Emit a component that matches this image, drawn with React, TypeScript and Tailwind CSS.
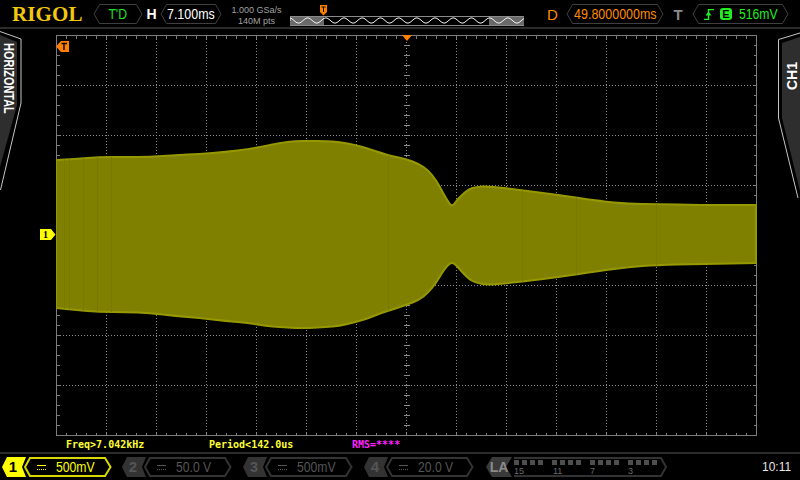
import type { ReactNode } from "react";

// plot is 700x400 with 50px divisions, coordinates below are relative to it (x-57, y-35)
const topEdge: [number, number][] = [
  [0, 125], [20, 124], [43, 122], [70, 122], [93, 122], [120, 120], [143, 119], [170, 117], [193, 114], [210, 111],
  [223, 108], [240, 106], [253, 106], [270, 106], [283, 107], [300, 110], [313, 114], [325, 118], [335, 121], [350, 124],
  [363, 129], [372, 135], [380, 145], [386, 156], [391, 165], [396, 172], [401, 165], [407, 159], [413, 154], [420, 152],
  [433, 151], [463, 155], [503, 160], [543, 166], [573, 169], [600, 169], [643, 170], [700, 170],
];
const bottomEdge: [number, number][] = [
  [0, 273], [20, 275], [43, 277], [70, 277], [93, 278], [120, 281], [143, 283], [170, 286], [193, 288], [210, 291],
  [223, 292], [240, 293], [253, 293], [270, 292], [283, 291], [300, 287], [313, 283], [325, 278], [335, 275], [350, 270],
  [363, 265], [372, 258], [380, 248], [386, 238], [391, 231], [396, 227], [401, 231], [407, 238], [413, 244], [420, 248],
  [433, 250], [463, 247], [503, 242], [543, 236], [573, 232], [600, 230], [643, 229], [700, 228],
];

const smooth = (pts: [number, number][]) => {
  let d = `L${pts[0][0]} ${pts[0][1]}`;
  for (let i = 1; i < pts.length - 1; i++) {
    const mx = (pts[i][0] + pts[i + 1][0]) / 2;
    const my = (pts[i][1] + pts[i + 1][1]) / 2;
    d += ` Q${pts[i][0]} ${pts[i][1]} ${mx} ${my}`;
  }
  const last = pts[pts.length - 1];
  return d + ` L${last[0]} ${last[1]}`;
};

const range = (n: number) => Array.from({ length: n }, (_, i) => i);

// memory strip sine
const memoryWave = () => {
  let d = "M0 5";
  for (let x = 0; x <= 234; x++) d += ` L${x} ${(4.5 + 2.6 * Math.sin((x - 4) * (Math.PI * 2) / 18.2)).toFixed(2)}`;
  return d;
};

function Hex({ w, stroke = "#3f3f3f", className = "", children }: { w: number; stroke?: string; className?: string; children?: ReactNode }) {
  return (
    <div className={`relative h-[20px] shrink-0 flex items-center justify-center ${className}`} style={{ width: w }}>
      <svg className="absolute inset-0" width={w} height={20}>
        <path d={`M6.5 .5H${w - 6.5}L${w - 1} 10L${w - 6.5} 19.5H6.5L1 10Z`} fill="none" stroke={stroke} strokeWidth="1" />
      </svg>
      <div className="relative flex items-center">{children}</div>
    </div>
  );
}

function DcIcon({ color }: { color: string }) {
  return (
    <svg width="9" height="5" className="relative shrink-0">
      <path d="M0 .5H9" stroke={color} />
      <path d="M0 4.5H9" stroke={color} strokeDasharray="1 1" />
    </svg>
  );
}

function Channel({ n, volts, on }: { n: number; volts: string; on?: boolean }) {
  const color = on ? "#ffff00" : "#555555";
  return (
    <div className="flex items-center shrink-0 w-[111px] h-[20px]">
      <div className="relative w-[24px] h-[20px] flex items-center justify-center shrink-0">
        <svg className="absolute inset-0" width="24" height="20">
          <path d="M5 0H24L20 10L24 20H5L0 10Z" fill={on ? "#ffff00" : "#333333"} />
        </svg>
        <span className={`relative -ml-[2px] font-bold text-[15px] ${on ? "text-black" : "text-[#555555]"}`}>{n}</span>
      </div>
      <div className="relative -ml-[2px] w-[88px] h-[20px] flex items-center pl-[13px] shrink-0">
        <svg className="absolute inset-0" width="88" height="20">
          <path d="M1 10L6 1H81L86.5 10L81 19H6Z" fill="none" stroke={on ? "#d8d800" : "#333333"} strokeWidth="2" />
        </svg>
        <DcIcon color={color} />
        <span className="relative ml-[10px] text-[14px] origin-left scale-x-[.87] whitespace-nowrap" style={{ color }}>{volts}</span>
      </div>
    </div>
  );
}

function Plot() {
  const stripes = [8, 13, 27, 41, 55, 332, 466, 520, 600];
  const wave = `M0 ${topEdge[0][1]} ${smooth(topEdge)} ${smooth([...bottomEdge].reverse())} Z`;
  return (
    <svg width="702" height="402" className="block" shapeRendering="crispEdges">
      <defs>
        <clipPath id="wave-clip">
          <path d={wave} />
        </clipPath>
      </defs>
      <g transform="translate(.5 .5)">
        {range(13).map((i) => (
          <path key={`v${i}`} d={`M${50 * (i + 1)} 0V400`} stroke="#8a8a8a" strokeDasharray="1 2" />
        ))}
        {range(7).map((i) => (
          <path key={`h${i}`} d={`M0 ${50 * (i + 1)}H700`} stroke="#8a8a8a" strokeDasharray="1 2" />
        ))}
        {range(69).map((i) => {
          const x = 10 * (i + 1);
          return <path key={`t${i}`} d={`M${x} 0v3M${x} 400v-3`} stroke="#7c7c7c" />;
        })}
        {range(39).map((i) => {
          const y = 10 * (i + 1);
          return <path key={`l${i}`} d={`M0 ${y}h3M700 ${y}h-3`} stroke="#7c7c7c" />;
        })}
        {range(39).map((i) => (
          <path key={`c${i}`} d={`M347 ${10 * (i + 1)}h6`} stroke="#8a8a8a" />
        ))}
        <rect x="0" y="0" width="700" height="400" fill="none" stroke="#7c7c7c" />
      </g>
      <path d={wave} fill="#808000" stroke="#969800" strokeWidth="2" shapeRendering="auto" />
      <g clipPath="url(#wave-clip)">
        {stripes.map((x) => (
          <path key={x} d={`M${x} 100V300`} stroke="#7a7a00" strokeWidth="1" />
        ))}
      </g>
    </svg>
  );
}

export default function App() {
  return (
    <div className="w-[800px] h-[480px] bg-black overflow-hidden flex flex-col font-['Liberation_Sans',sans-serif]">
      {/* Top bar */}
      <div className="h-[27px] flex items-start pt-[4px] shrink-0">
        <span className="w-[93px] shrink-0 pl-[12px] -mt-[2px] font-['Liberation_Serif',serif] font-bold text-[21px] leading-[24px] text-[#f2c80f] tracking-[.1px]">RIGOL</span>
        <Hex w={50}>
          <span className="text-[14px] text-[#22e022] scale-x-[.87]">T'D</span>
        </Hex>
        <span className="w-[17px] shrink-0 text-center text-[14px] leading-[20px] font-bold text-white">H</span>
        <Hex w={62}>
          <span className="text-[14px] text-white scale-x-[.89]">7.100ms</span>
        </Hex>
        <div className="w-[68px] shrink-0 flex flex-col items-center text-[9px] leading-[11px] text-[#a0a0a0] pl-[1px] mt-[1px]">
          <span className="whitespace-nowrap">1.000 GSa/s</span>
          <span className="whitespace-nowrap">140M pts</span>
        </div>
        <div className="relative w-[234px] h-[10px] mt-[12px] bg-[#6a6a6a] shrink-0">
          <div className="absolute left-[34px] w-[165px] top-0 h-full bg-black" />
          <svg className="absolute inset-0" width="234" height="10">
            <path d="M0 .5H234" stroke="#8a8a8a" />
            <path d="M0 9.5H234" stroke="#8a8a8a" />
            <path d={memoryWave()} fill="none" stroke="#f2f2f2" strokeWidth="1" />
          </svg>
          <svg className="absolute -top-[11px] left-[30px]" width="8" height="11">
            <path d="M0 0H7V7L3.5 10.5L0 7Z" fill="#ff8000" />
            <path d="M1.5 2H5.5M3.5 2V7" stroke="#000" strokeWidth="1" />
          </svg>
        </div>
        <span className="w-[43px] shrink-0 pl-[23px] text-[15px] leading-[22px] text-[#ff8a00]">D</span>
        <Hex w={98} className="-ml-[1px]">
          <span className="text-[14px] text-[#ff8a00] scale-x-[.89] whitespace-nowrap">49.8000000ms</span>
        </Hex>
        <span className="w-[28px] shrink-0 text-center text-[15px] leading-[22px] font-bold text-[#8c8c8c]">T</span>
        <Hex w={97}>
          <svg width="10" height="11" className="mr-[6px] ml-[1px]">
            <path d="M0 10.5H4.5V.5H10" stroke="#22ee22" fill="none" strokeWidth="1.4" />
            <path d="M1.5 6.5L4.5 2.5L7.5 6.5Z" fill="#22ee22" />
          </svg>
          <span className="w-[12px] h-[12px] mr-[7px] rounded-[3px] bg-[#22ee22] text-black text-[11px] leading-[12px] font-bold text-center">E</span>
          <span className="text-[14px] text-[#22ee22] origin-left scale-x-[.87] w-[39px] whitespace-nowrap">516mV</span>
        </Hex>
      </div>

      <div className="h-[2px] bg-[#2b2b2b] shrink-0" />

      {/* Scope area */}
      <div className="flex h-[423px] shrink-0">
        <div className="relative w-[56px] shrink-0">
          <svg className="absolute left-0 top-[2px]" width="23" height="160">
            <path d="M0 4L17 11V74L0 136Z" fill="#2e2e2e" />
            <path d="M0 .5L21 8V72L.5 159" fill="none" stroke="#c4c4c4" strokeWidth="1" />
          </svg>
          <span className="absolute left-[2px] top-[14px] [writing-mode:vertical-rl] text-[14px] leading-[14px] font-bold text-white origin-top scale-y-[.78] whitespace-nowrap">HORIZONTAL</span>
          <svg className="absolute left-[40px] top-[200px]" width="16" height="11">
            <path d="M0 0H11L15.5 5.5L11 11H0Z" fill="#ffff00" />
          </svg>
          <span className="absolute left-[40px] top-[200px] w-[11px] text-center text-[10px] leading-[11px] text-black font-['Liberation_Serif',serif] font-bold">1</span>
        </div>
        <div className="relative w-[722px] shrink-0 pt-[6px]">
          <Plot />
          <svg className="absolute left-0 top-[12px]" width="14" height="12">
            <path d="M0 5.5L5 0H13V11H5Z" fill="#ff8000" />
            <path d="M5.5 2.5H11M8 2.5V9" stroke="#000" strokeWidth="1.4" />
          </svg>
          <svg className="absolute left-[346px] top-[6px]" width="12" height="7">
            <path d="M0 0H10L5 6Z" fill="#ff8000" />
          </svg>
        </div>
        <div className="relative flex-1">
          <svg className="absolute left-0 top-[2px]" width="22" height="172">
            <path d="M4 12L22 6V160L4 87Z" fill="#2e2e2e" />
            <path d="M22 2L.5 8.5V87L20 167" fill="none" stroke="#c4c4c4" strokeWidth="1" />
          </svg>
          <span className="absolute left-[7px] top-[33px] rotate-180 [writing-mode:vertical-rl] text-[14px] leading-[14px] font-bold text-white whitespace-nowrap">CH1</span>
        </div>
      </div>

      {/* Measurements */}
      <div className="relative -mt-[15px] h-[15px] pl-[66px] flex items-center font-['DejaVu_Sans_Mono',monospace] font-bold text-[10px] text-[#ffff33] shrink-0">
        <span className="w-[143px]">Freq&gt;7.042kHz</span>
        <span className="w-[143px]">Period&lt;142.0us</span>
        <span className="text-[#ff22ff]">RMS=****</span>
      </div>

      <div className="h-[2px] bg-[#2b2b2b] shrink-0" />

      {/* Bottom bar */}
      <div className="flex items-center pl-[2px] h-[22px] mt-[2px] shrink-0">
        <Channel n={1} volts="500mV" on />
        <div className="w-[9px]" />
        <Channel n={2} volts="50.0 V" />
        <div className="w-[10px]" />
        <Channel n={3} volts="500mV" />
        <div className="w-[10px]" />
        <Channel n={4} volts="20.0 V" />
        <div className="w-[11px]" />
        <div className="flex items-center w-[182px] h-[20px] shrink-0">
          <div className="relative w-[26px] h-[20px] flex items-center justify-center shrink-0">
            <svg className="absolute inset-0" width="26" height="20">
              <path d="M6 0H26L20 10L26 20H6L0 10Z" fill="#3a3a3a" />
            </svg>
            <span className="relative text-[14px] font-bold text-[#8a8a8a]">LA</span>
          </div>
          <div className="relative w-[156px] h-[20px] -ml-[1px] shrink-0">
            <svg className="absolute inset-0" width="156" height="20">
              <path d="M3 1H150L155 10L150 19H3" fill="none" stroke="#333333" strokeWidth="2" />
              {range(4).map((g) =>
                range(4).map((i) => (
                  <rect key={`${g}-${i}`} x={3 + g * 38 + i * 8} y={3} width={5} height={5} fill="#4e4e4e" />
                ))
              )}
            </svg>
            <div className="absolute left-0 top-[9px] w-full text-[9px] leading-[10px] text-[#6a6a6a]">
              <span className="absolute left-[3px]">15</span>
              <span className="absolute left-[42px]">11</span>
              <span className="absolute left-[79px]">7</span>
              <span className="absolute left-[117px]">3</span>
            </div>
          </div>
        </div>
        <span className="ml-[94px] text-[13px] text-[#e6e6e6] origin-left scale-x-[.92]">10:11</span>
      </div>
    </div>
  );
}
